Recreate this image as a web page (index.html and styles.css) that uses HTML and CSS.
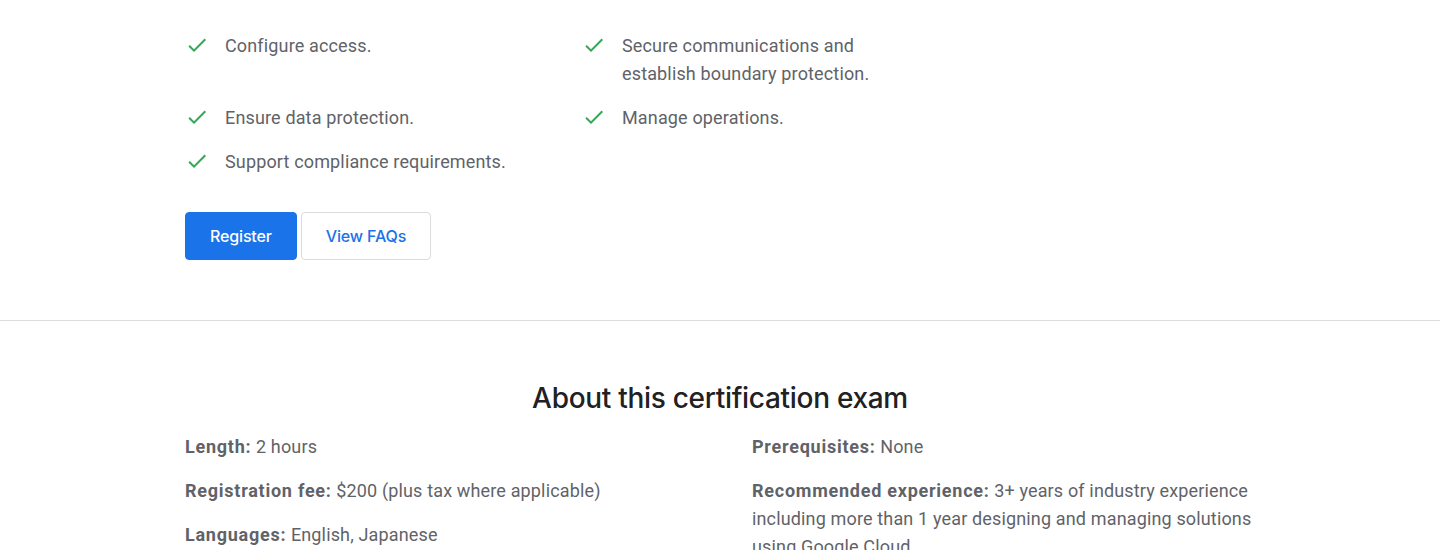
FILE: index.html
```html
<!DOCTYPE html>
<html lang="en">
<head>
<meta charset="utf-8">
<title>About this certification exam</title>
<link rel="stylesheet" href="styles.css">
</head>
<body>
<section class="skills">
  <div class="container">
    <ul class="checklist">
      <li class="check-item">
        <svg class="check" viewBox="0 0 24 24" width="24" height="24"><path d="M9 16.17L4.83 12l-1.42 1.41L9 19 21 7l-1.41-1.41z"/></svg>
        <span class="check-text">Configure access.</span>
      </li>
      <li class="check-item">
        <svg class="check" viewBox="0 0 24 24" width="24" height="24"><path d="M9 16.17L4.83 12l-1.42 1.41L9 19 21 7l-1.41-1.41z"/></svg>
        <span class="check-text">Secure communications and establish boundary protection.</span>
      </li>
      <li class="check-item">
        <svg class="check" viewBox="0 0 24 24" width="24" height="24"><path d="M9 16.17L4.83 12l-1.42 1.41L9 19 21 7l-1.41-1.41z"/></svg>
        <span class="check-text">Ensure data protection.</span>
      </li>
      <li class="check-item">
        <svg class="check" viewBox="0 0 24 24" width="24" height="24"><path d="M9 16.17L4.83 12l-1.42 1.41L9 19 21 7l-1.41-1.41z"/></svg>
        <span class="check-text">Manage operations.</span>
      </li>
      <li class="check-item">
        <svg class="check" viewBox="0 0 24 24" width="24" height="24"><path d="M9 16.17L4.83 12l-1.42 1.41L9 19 21 7l-1.41-1.41z"/></svg>
        <span class="check-text">Support compliance requirements.</span>
      </li>
    </ul>
    <div class="actions">
      <a class="btn btn-primary" href="#">Register</a>
      <a class="btn btn-outline" href="#">View FAQs</a>
    </div>
  </div>
</section>
<section class="about">
  <div class="container">
    <h2 class="about-title">About this certification exam</h2>
    <div class="about-grid">
      <div class="about-col">
        <p class="fact"><b>Length:</b> 2 hours</p>
        <p class="fact"><b>Registration fee:</b> $200 (plus tax where applicable)</p>
        <p class="fact"><b>Languages:</b> English, Japanese</p>
      </div>
      <div class="about-col">
        <p class="fact"><b>Prerequisites:</b> None</p>
        <p class="fact"><b>Recommended experience:</b> 3+ years of industry experience including more than 1 year designing and managing solutions using Google Cloud.</p>
      </div>
    </div>
  </div>
</section>
</body>
</html>
```
FILE: styles.css
```css
* { box-sizing: border-box; }
html, body { margin: 0; padding: 0; background: #fff; }
body {
  font-family: Roboto, "Liberation Sans", Arial, sans-serif;
  color: #5f6368;
  font-size: 18px;
  line-height: 28px;
  letter-spacing: 0.15px;
}
.container {
  width: 1070px;
  margin: 0 auto;
}
.skills {
  padding: 32px 0 60px;
  border-bottom: 1px solid #dadce0;
}
.checklist {
  list-style: none;
  margin: 0;
  padding: 0;
  display: grid;
  grid-template-columns: 397px 320px;
  row-gap: 16px;
}
.check-item {
  display: flex;
  align-items: flex-start;
  gap: 16px;
}
.check {
  flex: none;
  fill: #34a853;
  margin-top: 1px;
}
.check-text { display: block; }
.actions {
  display: flex;
  gap: 4px;
  margin-top: 36px;
}
.btn {
  display: inline-flex;
  align-items: center;
  justify-content: center;
  height: 48px;
  padding: 0 24px;
  border-radius: 4px;
  font-family: Inter, "Open Sans", Roboto, sans-serif;
  font-weight: 500;
  font-size: 16px;
  letter-spacing: -0.15px;
  text-decoration: none;
}
.btn-primary {
  background: #1a73e8;
  color: #fff;
  border: 1px solid #1a73e8;
}
.btn-outline {
  background: #fff;
  color: #1a73e8;
  border: 1px solid #dadce0;
}
.about {
  padding-top: 59px;
}
.about-title {
  margin: 0 0 17px;
  text-align: center;
  font-family: Inter, "Open Sans", Roboto, sans-serif;
  font-weight: 500;
  font-size: 28px;
  line-height: 36px;
  letter-spacing: -0.3px;
  color: #202124;
}
.about-grid {
  display: grid;
  grid-template-columns: 503px 503px;
  column-gap: 64px;
}
.fact {
  margin: 0 0 16px;
}
.fact b {
  font-weight: 700;
  letter-spacing: 0.75px;
}
```
